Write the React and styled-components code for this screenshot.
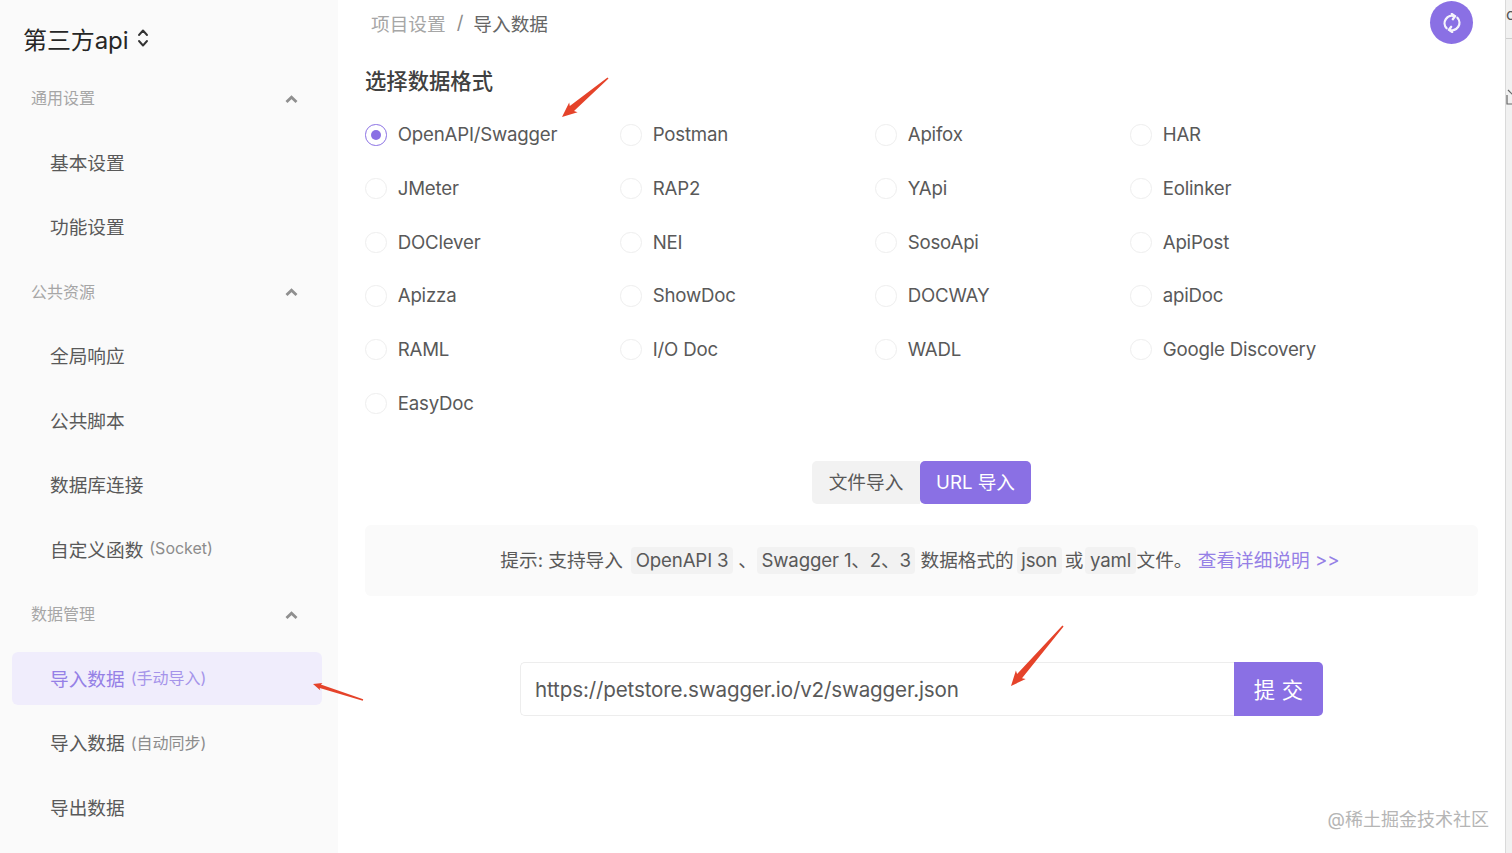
import React from "react";
import styled, { createGlobalStyle } from "styled-components";

const FONT = `Inter, "Noto Sans CJK SC", sans-serif`;
const PURPLE = "#8a70e4";

const Global = createGlobalStyle`
  html, body { margin: 0; padding: 0; background: #fff; }
  body { font-family: ${FONT}; overflow: hidden; }
`;

const Page = styled.div`
  position: relative;
  display: flex;
  width: 1512px;
  height: 853px;
  overflow: hidden;
`;

const Sidebar = styled.aside`
  flex: 0 0 338px;
  box-sizing: border-box;
  background: #fafafa;
  padding: 14px 16px 0 12px;
`;

const ProjectTitle = styled.div`
  display: flex;
  align-items: center;
  height: 48px;
  margin-bottom: 9px;
  padding-left: 11px;
  gap: 9px;
  font-size: 24px;
  letter-spacing: -0.1px;
  color: #262626;
`;

const NavHeader = styled.div`
  display: flex;
  align-items: center;
  justify-content: space-between;
  box-sizing: border-box;
  height: 53.5px;
  margin-top: 7.4px;
  margin-bottom: 11px;
  padding: 0 24px 1px 19px;
  font-size: 16px;
  color: #a6a6a6;
`;

const NavItem = styled.div`
  display: flex;
  align-items: center;
  box-sizing: border-box;
  height: 53.5px;
  margin-bottom: 11px;
  padding: 0 0 2px 38px;
  border-radius: 6px;
  font-size: 18.67px;
  color: ${(p) => (p.$active ? "#9580e6" : "#595959")};
  background: ${(p) => (p.$active ? "#f0edfc" : "transparent")};
`;

const NavNote = styled.span`
  margin-left: 6px;
  font-size: 16px;
  color: ${(p) => (p.$active ? "#a594ea" : "#8c8c8c")};
`;

const Main = styled.main`
  flex: 1;
  min-width: 0;
  box-sizing: border-box;
  padding: 0 27px 0 27px;
`;

const TopBar = styled.div`
  display: flex;
  justify-content: space-between;
  height: 48px;
`;

const Breadcrumb = styled.div`
  display: flex;
  align-items: center;
  height: 44px;
  padding-left: 6px;
  font-size: 18.67px;
  color: #a6a6a6;
`;

const CrumbSep = styled.span`
  margin: 0 10px 0 11px;
  color: #8c8c8c;
`;

const CrumbCurrent = styled.span`
  color: #666;
`;

const Avatar = styled.div`
  display: flex;
  align-items: center;
  justify-content: center;
  width: 43px;
  height: 43px;
  margin: 1px 5px 0 0;
  border-radius: 50%;
  background: ${PURPLE};
`;

const SectionTitle = styled.h2`
  display: flex;
  align-items: center;
  height: 58px;
  margin: 2px 0 0;
  font-size: 21.33px;
  font-weight: 500;
  color: #404040;
`;

const RadioGrid = styled.div`
  display: grid;
  grid-template-columns: repeat(4, 255px);
  grid-auto-rows: 53.7px;
  margin-left: 0.4px;
`;

const RadioRow = styled.label`
  display: flex;
  align-items: center;
  gap: 11px;
  font-size: 18.67px;
  letter-spacing: -0.2px;
  color: #595959;
`;

const RadioCircle = styled.span`
  flex: none;
  display: flex;
  align-items: center;
  justify-content: center;
  box-sizing: border-box;
  width: 21.33px;
  height: 21.33px;
  border-radius: 50%;
  border: 1.3px solid ${(p) => (p.$checked ? PURPLE : "#eeeeee")};
  background: #fff;

  &::after {
    content: "";
    display: ${(p) => (p.$checked ? "block" : "none")};
    width: 10.6px;
    height: 10.6px;
    border-radius: 50%;
    background: ${PURPLE};
  }
`;

const Segment = styled.div`
  display: flex;
  justify-content: center;
  margin-top: 30.5px;
`;

const SegmentItem = styled.div`
  display: flex;
  align-items: center;
  justify-content: center;
  box-sizing: border-box;
  width: ${(p) => p.$w}px;
  height: 43px;
  padding-bottom: 4px;
  font-size: 18.67px;
  color: ${(p) => (p.$active ? "#fff" : "#595959")};
  background: ${(p) => (p.$active ? PURPLE : "#f2f2f2")};
  border-radius: ${(p) => (p.$active ? "5px" : "5px 0 0 5px")};
`;

const Hint = styled.div`
  display: flex;
  align-items: center;
  justify-content: center;
  box-sizing: border-box;
  height: 71px;
  margin-top: 21px;
  padding: 0 3px 4px 0;
  border-radius: 6px;
  background: #fafafa;
  font-size: 18.67px;
  color: #595959;
`;

const HintText = styled.span`
  white-space: pre;
`;

const Code = styled.span`
  padding: 2px 4.5px;
  margin: 0 ${(p) => p.$r ?? 0}px 0 ${(p) => p.$l ?? 0}px;
  border-radius: 4px;
  background: #f2f2f2;
  letter-spacing: -0.15px;
`;

const HintLink = styled.span`
  color: #9580e6;
`;

const UrlForm = styled.div`
  display: flex;
  justify-content: center;
  margin-top: 66px;
`;

const UrlInput = styled.div`
  display: flex;
  align-items: center;
  box-sizing: border-box;
  width: 714px;
  height: 54px;
  padding: 2px 0 0 14px;
  border: 1px solid #ededed;
  border-right: none;
  border-radius: 5px 0 0 5px;
  font-size: 20.6px;
  letter-spacing: -0.15px;
  color: #595959;
`;

const SubmitButton = styled.button`
  width: 89px;
  height: 54px;
  padding: 0;
  border: none;
  border-radius: 0 5px 5px 0;
  background: ${PURPLE};
  color: #fff;
  font-family: ${FONT};
  font-size: 21.33px;
  letter-spacing: 0.3px;
`;

const EdgeStrip = styled.div`
  flex: 0 0 7px;
  position: relative;
  box-sizing: border-box;
  border-left: 1.5px solid #dadada;
  overflow: hidden;
  background: #f1f1f1;
`;

const EdgeGlyph = styled.span`
  position: absolute;
  left: 0;
  top: 4px;
  font-size: 16px;
  line-height: 20px;
  color: #555;
`;

const EdgeRule = styled.div`
  position: absolute;
  left: 0;
  right: 0;
  top: 38px;
  height: 1px;
  background: #cfcfcf;
`;

const EdgeIcon = styled.svg`
  position: absolute;
  left: 0;
  top: 88px;
`;

const Overlay = styled.svg`
  position: absolute;
  left: 0;
  top: 0;
  pointer-events: none;
`;

const Watermark = styled.div`
  position: absolute;
  right: 23px;
  top: 805px;
  font-size: 18px;
  color: #b5b5b5;
`;

const ChevronSvg = styled.svg`
  margin-top: 4px;
`;

const formats = [
  "OpenAPI/Swagger", "Postman", "Apifox", "HAR",
  "JMeter", "RAP2", "YApi", "Eolinker",
  "DOClever", "NEI", "SosoApi", "ApiPost",
  "Apizza", "ShowDoc", "DOCWAY", "apiDoc",
  "RAML", "I/O Doc", "WADL", "Google Discovery",
  "EasyDoc",
];

const nav = [
  { head: "通用设置" },
  { label: "基本设置" },
  { label: "功能设置" },
  { head: "公共资源" },
  { label: "全局响应" },
  { label: "公共脚本" },
  { label: "数据库连接" },
  { label: "自定义函数", note: "(Socket)" },
  { head: "数据管理" },
  { label: "导入数据", note: "(手动导入)", active: true },
  { label: "导入数据", note: "(自动同步)" },
  { label: "导出数据" },
];

const ChevronUp = () => (
  <ChevronSvg width="13" height="9" viewBox="0 0 13 9" fill="none">
    <path d="M1.5 7L6.5 2.2L11.5 7" stroke="#8f8f8f" strokeWidth="2.8" />
  </ChevronSvg>
);

const UpDown = () => (
  <svg width="12" height="20" viewBox="0 0 12 20" fill="none">
    <path d="M2 7L6 2.5L10 7M2 13L6 17.5L10 13" stroke="#333" strokeWidth="1.9" strokeLinecap="round" strokeLinejoin="round" />
  </svg>
);

const SyncIcon = () => (
  <svg width="20" height="20" viewBox="0 0 20 20" fill="none" stroke="#fff" strokeWidth="2.3" strokeLinecap="round" opacity="0.92">
    <path d="M4.6 15.2A7.4 7.4 0 0 1 12.6 3.2" />
    <path d="M15.4 4.8A7.4 7.4 0 0 1 7.4 16.8" />
    <path d="M9.8 1L13 3.3L10.8 6.2" />
    <path d="M10.2 19L7 16.7L9.2 13.8" />
  </svg>
);

const Arrow = ({ tipX, tipY, tailX, tailY, w }) => {
  const dx = tailX - tipX;
  const dy = tailY - tipY;
  const len = Math.hypot(dx, dy);
  const ux = dx / len;
  const uy = dy / len;
  const nx = -uy;
  const ny = ux;
  const head = w * 2.3;
  const bx = tipX + ux * head;
  const by = tipY + uy * head;
  const p = (x, y) => `${x.toFixed(1)},${y.toFixed(1)}`;
  const points = [
    p(tipX, tipY),
    p(bx + nx * w, by + ny * w),
    p(bx - ux * w * 0.3 + nx * w * 0.5, by - uy * w * 0.3 + ny * w * 0.5),
    p(tailX + nx * 0.8, tailY + ny * 0.8),
    p(tailX - nx * 0.8, tailY - ny * 0.8),
    p(bx - ux * w * 0.3 - nx * w * 0.5, by - uy * w * 0.3 - ny * w * 0.5),
    p(bx - nx * w, by - ny * w),
  ].join(" ");
  return <polygon points={points} fill="#e5432a" />;
};

export default function App() {
  return (
    <Page>
      <Global />
      <Sidebar>
        <ProjectTitle>
          第三方api
          <UpDown />
        </ProjectTitle>
        {nav.map((n, i) =>
          n.head ? (
            <NavHeader key={i}>
              {n.head}
              <ChevronUp />
            </NavHeader>
          ) : (
            <NavItem key={i} $active={n.active}>
              {n.label}
              {n.note && <NavNote $active={n.active}>{n.note}</NavNote>}
            </NavItem>
          )
        )}
      </Sidebar>
      <Main>
        <TopBar>
          <Breadcrumb>
            项目设置
            <CrumbSep>/</CrumbSep>
            <CrumbCurrent>导入数据</CrumbCurrent>
          </Breadcrumb>
          <Avatar>
            <SyncIcon />
          </Avatar>
        </TopBar>
        <SectionTitle>选择数据格式</SectionTitle>
        <RadioGrid>
          {formats.map((f, i) => (
            <RadioRow key={f}>
              <RadioCircle $checked={i === 0} />
              {f}
            </RadioRow>
          ))}
        </RadioGrid>
        <Segment>
          <SegmentItem $w={108}>文件导入</SegmentItem>
          <SegmentItem $w={111} $active>URL 导入</SegmentItem>
        </Segment>
        <Hint>
          <HintText>
            提示: 支持导入 <Code $l={3}>OpenAPI 3</Code> 、<Code $r={5}>Swagger 1、2、3</Code>数据格式的<Code $l={3} $r={3}>json</Code>或<Code $l={2} $r={1}>yaml</Code>文件。 <HintLink>查看详细说明 &gt;&gt;</HintLink>
          </HintText>
        </Hint>
        <UrlForm>
          <UrlInput>https://petstore.swagger.io/v2/swagger.json</UrlInput>
          <SubmitButton>提 交</SubmitButton>
        </UrlForm>
      </Main>
      <EdgeStrip>
        <EdgeGlyph>c</EdgeGlyph>
        <EdgeRule />
        <EdgeIcon width="7" height="20" viewBox="0 0 7 20" fill="none" stroke="#666" strokeWidth="1.2">
          <path d="M1 7V16H7M2 2L7 7" />
        </EdgeIcon>
      </EdgeStrip>
      <Overlay width="1512" height="853" viewBox="0 0 1512 853">
        <Arrow tipX={562} tipY={117} tailX={608} tailY={78} w={6.5} />
        <Arrow tipX={313} tipY={684} tailX={363} tailY={700} w={3.8} />
        <Arrow tipX={1011} tipY={686} tailX={1063} tailY={626} w={6.5} />
      </Overlay>
      <Watermark>@稀土掘金技术社区</Watermark>
    </Page>
  );
}
